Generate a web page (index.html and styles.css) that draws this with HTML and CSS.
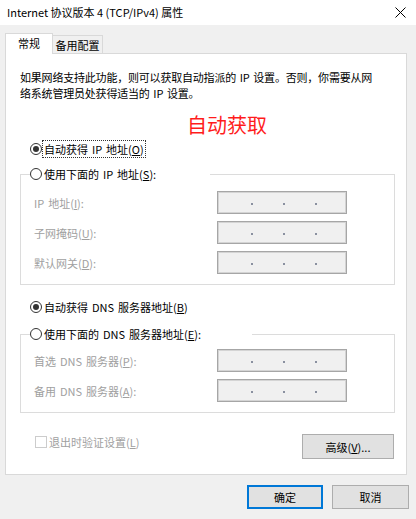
FILE: index.html
```html
<!DOCTYPE html>
<html lang="zh-CN">
<head>
  <meta charset="UTF-8">
  <title>Internet 协议版本 4 (TCP/IPv4) 属性</title>
  <link rel="stylesheet" href="styles.css">
</head>
<body>
  <div class="window">
    <div class="titlebar">
      <span class="title">Internet 协议版本 4 (TCP/IPv4) 属性</span>
      <svg class="close" width="11" height="11" viewBox="0 0 11 11">
        <path d="M0.5 0.5 L10.5 10.5 M10.5 0.5 L0.5 10.5" stroke="#000" stroke-width="1" fill="none"/>
      </svg>
    </div>

    <div class="tabs">
      <div class="tab active">常规</div>
      <div class="tab">备用配置</div>
    </div>

    <div class="panel">
      <p class="intro">如果网络支持此功能，则可以获取自动指派的 IP 设置。否则，你需要从网<br>络系统管理员处获得适当的 IP 设置。</p>
      <div class="note">自动获取</div>

      <div class="radio checked first">
        <span class="circle"></span>
        <span class="label focus">自动获得 IP 地址(<u>O</u>)</span>
      </div>

      <fieldset class="group ip-group">
        <legend class="radio legend-ip">
          <span class="circle"></span>
          <span class="label">使用下面的 IP 地址(<u>S</u>):</span>
        </legend>
        <div class="field">
          <span class="field-label">IP 地址(<u>I</u>):</span>
          <span class="ipbox"><i></i><i></i><i></i></span>
        </div>
        <div class="field">
          <span class="field-label">子网掩码(<u>U</u>):</span>
          <span class="ipbox"><i></i><i></i><i></i></span>
        </div>
        <div class="field">
          <span class="field-label">默认网关(<u>D</u>):</span>
          <span class="ipbox"><i></i><i></i><i></i></span>
        </div>
      </fieldset>

      <div class="radio checked dns-auto">
        <span class="circle"></span>
        <span class="label">自动获得 DNS 服务器地址(<u>B</u>)</span>
      </div>

      <fieldset class="group dns-group">
        <legend class="radio legend-dns">
          <span class="circle"></span>
          <span class="label">使用下面的 DNS 服务器地址(<u>E</u>):</span>
        </legend>
        <div class="field">
          <span class="field-label">首选 DNS 服务器(<u>P</u>):</span>
          <span class="ipbox"><i></i><i></i><i></i></span>
        </div>
        <div class="field">
          <span class="field-label">备用 DNS 服务器(<u>A</u>):</span>
          <span class="ipbox"><i></i><i></i><i></i></span>
        </div>
      </fieldset>

      <div class="bottom-row">
        <div class="check">
          <span class="box"></span>
          <span class="check-label">退出时验证设置(<u>L</u>)</span>
        </div>
        <button class="btn advanced">高级(<u>V</u>)...</button>
      </div>
    </div>

    <div class="actions">
      <button class="btn default">确定</button>
      <button class="btn">取消</button>
    </div>
  </div>
</body>
</html>
```

FILE: styles.css
```css
html, body {
  margin: 0;
  padding: 0;
  width: 416px;
  height: 519px;
  background: #f0f0f0;
  font-family: "Noto Sans CJK SC", "Noto Sans", sans-serif;
  font-size: 11px;
  word-spacing: 1.5px;
  color: #000;
  overflow: hidden;
}
.window {
  width: 416px;
  height: 519px;
  display: flex;
  flex-direction: column;
}
.titlebar {
  height: 25px;
  background: #fff;
  display: flex;
  align-items: center;
  padding: 0 10px 0 7px;
  box-sizing: border-box;
}
.title {
  font-size: 11px;
  line-height: 16px;
  margin-top: -1px;
  word-spacing: 0;
}
.close {
  margin-left: auto;
  margin-top: -1px;
}

/* tabs */
.tabs {
  display: flex;
  align-items: flex-end;
  height: 20px;
  margin-top: 8px;
  padding-left: 5px;
}
.tab {
  box-sizing: border-box;
  height: 18px;
  width: 51px;
  border: 1px solid #d9d9d9;
  border-bottom: none;
  background: #f0f0f0;
  text-align: center;
  line-height: 18px;
  font-size: 11px;
  margin-left: -1px;
}
.tab.active {
  width: 48px;
  height: 21px;
  margin-left: 0;
  margin-bottom: -1px;
  background: #fff;
  line-height: 19px;
  position: relative;
  z-index: 1;
}

/* main panel */
.panel {
  box-sizing: border-box;
  width: 402px;
  height: 422px;
  margin-left: 5px;
  background: #fff;
  border: 1px solid #d9d9d9;
  padding: 15px 11px 0 14px;
  display: flex;
  flex-direction: column;
}
.intro {
  margin: 0;
  line-height: 16px;
  letter-spacing: -0.2px;
}
.note {
  margin: 12px 0 0 167px;
  color: #ff1c1c;
  font-size: 20px;
  line-height: 24px;
}

.radio {
  display: flex;
  align-items: center;
  gap: 2px;
  height: 18px;
  margin-left: 10px;
}
.radio.first { margin-top: 3px; }
.radio.dns-auto { margin-top: 13px; }
.circle {
  box-sizing: border-box;
  width: 12px;
  height: 12px;
  border: 1px solid #333;
  border-radius: 50%;
  background: #fff;
  display: flex;
  align-items: center;
  justify-content: center;
}
.radio.checked .circle::after {
  content: "";
  width: 6px;
  height: 6px;
  border-radius: 50%;
  background: #333;
}
.label {
  line-height: 16px;
  white-space: nowrap;
}
.label.focus {
  outline: 1px dotted #333;
  padding: 0 1px;
  margin-left: -1px;
}

/* group boxes */
.group {
  margin: 7px 0 0 0;
  padding: 8px 0 10px 0;
  border: 1px solid #dcdcdc;
  display: flex;
  flex-direction: column;
  gap: 7px;
}
.dns-group {
  margin-top: 9px;
  padding-top: 6px;
}
.group legend {
  padding: 0;
  margin-left: 9px;
  box-sizing: border-box;
}
.legend-ip { width: 180px; }
.legend-dns { width: 222px; }

.field {
  display: flex;
  align-items: center;
  padding-left: 13px;
  height: 23px;
}
.field-label {
  width: 183px;
  color: #a0a0a0;
  line-height: 16px;
}
.ipbox {
  box-sizing: border-box;
  width: 130px;
  height: 23px;
  background: #f0f0f0;
  border: 1px solid #a6a6a6;
  box-shadow: inset 0 0 0 1px #d4d4d4;
  display: flex;
  align-items: center;
  gap: 30px;
  padding: 3px 0 0 33px;
}
.ipbox i {
  width: 2px;
  height: 2px;
  background: #8a90a0;
}

/* checkbox + advanced */
.bottom-row {
  display: flex;
  align-items: flex-start;
  margin-top: 21px;
}
.check {
  display: flex;
  align-items: center;
  gap: 2px;
  margin-left: 15px;
  height: 16px;
}
.box {
  box-sizing: border-box;
  width: 12px;
  height: 12px;
  border: 1px solid #cccccc;
  background: #fff;
}
.check-label {
  color: #a0a0a0;
  line-height: 16px;
}

.btn {
  box-sizing: border-box;
  font-family: "Noto Sans CJK SC", "Noto Sans", sans-serif;
  font-size: 11px;
  color: #000;
  background: #e1e1e1;
  border: 1px solid #adadad;
  padding: 0;
  line-height: 16px;
  width: 77px;
  height: 24px;
}
.btn.advanced {
  margin-left: auto;
  margin-right: 1px;
  width: 92px;
  height: 25px;
}
.btn.default {
  width: 76px;
  border: 2px solid #0078d7;
}

.actions {
  display: flex;
  justify-content: flex-end;
  gap: 9px;
  margin-top: 10px;
  padding-right: 7px;
}
```
